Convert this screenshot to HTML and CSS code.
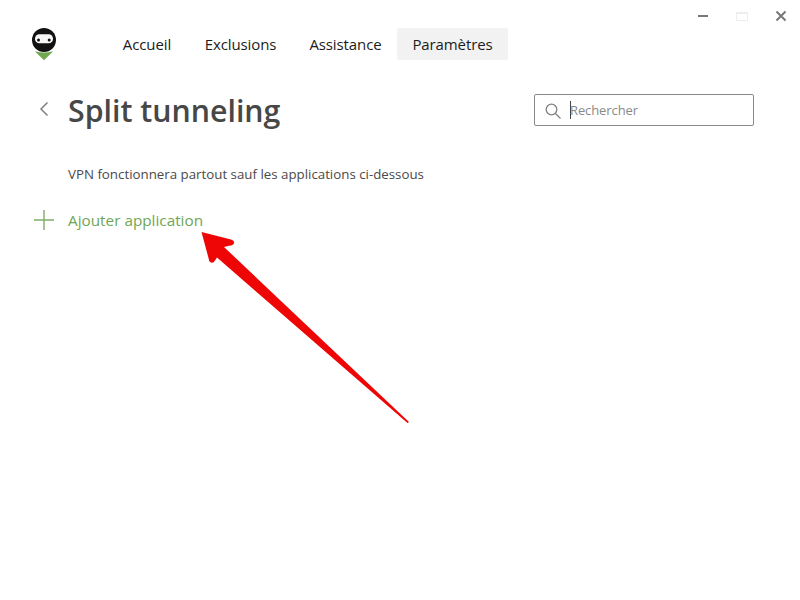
FILE: index.html
```html
<!DOCTYPE html>
<html lang="fr">
<head>
<meta charset="utf-8">
<title>Split tunneling</title>
<link rel="stylesheet" href="styles.css">
</head>
<body>
<div class="app">
  <div class="win-controls">
    <svg class="win-icon" width="12" height="12" viewBox="0 0 12 12"><rect x="1" y="5" width="10" height="2" fill="#777"/></svg>
    <svg class="win-icon" width="14" height="12" viewBox="0 0 14 12"><rect x="1.500" y="2.500" width="11" height="8" fill="none" stroke="#eee"/><rect x="1" y="2" width="12" height="2" fill="#eee"/></svg>
    <svg class="win-icon" width="12" height="12" viewBox="0 0 12 12"><path d="M1.500 1.500l9 9M10.500 1.500l-9 9" stroke="#777" stroke-width="2" fill="none"/></svg>
  </div>
  <header class="topbar">
    <svg class="logo" width="24" height="33" viewBox="0 0 24 33">
      <path d="M2.800 23.200Q12 26 21.200 23.200L12 32.200z" fill="#6fa84f"/>
      <circle cx="12" cy="12" r="12" fill="#111"/>
      <rect x="3" y="6.200" width="18" height="9" rx="4.300" fill="#f6f6f6"/>
      <circle cx="6.500" cy="12" r="1.500" fill="#111"/>
      <circle cx="17.200" cy="12" r="1.500" fill="#111"/>
    </svg>
    <nav class="nav">
      <a class="nav-item">Accueil</a>
      <a class="nav-item">Exclusions</a>
      <a class="nav-item">Assistance</a>
      <a class="nav-item nav-active">Paramètres</a>
    </nav>
  </header>
  <section class="title-row">
    <svg class="back" width="12" height="16" viewBox="0 0 12 16"><path d="M9.500 1.500L3 8l6.500 6.500" fill="none" stroke="#808080" stroke-width="1.500"/></svg>
    <h1 class="title">Split tunneling</h1>
    <div class="search">
      <svg class="search-icon" width="18" height="18" viewBox="0 0 18 18"><circle cx="7.500" cy="7.500" r="5.300" fill="none" stroke="#808080" stroke-width="1.300"/><path d="M11.500 11.500l5 5" stroke="#808080" stroke-width="1.300"/></svg>
      <span class="caret"></span>
      <span class="placeholder">Rechercher</span>
    </div>
  </section>
  <p class="desc">VPN fonctionnera partout sauf les applications ci-dessous</p>
  <div class="add">
    <svg class="plus" width="20" height="20" viewBox="0 0 20 20"><path d="M10 0v20M0 10h20" stroke="#7fae66" stroke-width="1.400"/></svg>
    <span class="add-label">Ajouter application</span>
  </div>
</div>
<svg class="arrow" width="800" height="600" viewBox="0 0 800 600">
  <path d="M201.500 232L231 239.500Q235 241 234 243.500Q232.500 246 229 245.800L224 247L409 422L407.500 423L217 257.500L215 260.500Q213 264 210 262Q209 261 208.500 258z" fill="#ee0505"/>
</svg>
</body>
</html>
```

FILE: styles.css
```css
* { box-sizing: border-box; }
html, body { margin: 0; padding: 0; background: #fff; }
body { width: 800px; height: 600px; overflow: hidden; position: relative; font-family: "Open Sans", "Noto Sans", sans-serif; color: #444; }
.app { display: flex; flex-direction: column; height: 600px; }
.win-controls { display: flex; justify-content: flex-end; gap: 26px; height: 28px; padding: 10px 13px 0 0; }
.win-icon { flex: none; }
.topbar { display: flex; align-items: flex-start; padding: 0 0 0 32px; height: 32px; }
.logo { flex: none; }
.nav { display: grid; grid-template-columns: 82px 105px 105px 110px; margin-left: 50px; }
.nav-item { display: flex; align-items: center; justify-content: center; height: 32px; font-size: 15px; letter-spacing: -0.1px; color: #1c1c1c; border-radius: 2px; }
.nav-active { background: #f2f2f2; margin-left: -1px; }
.title-row { display: flex; align-items: center; padding: 34px 46px 0 38px; height: 66px; }
.back { flex: none; margin-bottom: 3px; }
.title { margin: 2px 0 0 18px; font-size: 30.300px; font-weight: 600; line-height: 32px; color: #474747; flex: 1; }
.search { display: flex; align-items: center; width: 220px; height: 32px; border: 1px solid #8a8a8a; border-radius: 2px; padding-left: 9px; }
.search-icon { flex: none; margin-top: 1px; }
.caret { width: 1px; height: 18px; background: #444; margin-left: 8px; flex: none; }
.placeholder { font-size: 13px; letter-spacing: -0.1px; color: #8a8a8a; margin-left: -1px; }
.desc { margin: 38px 0 0 68px; font-size: 13.300px; line-height: 20px; color: #4a4a4a; }
.add { display: flex; align-items: center; margin: 26px 0 0 34px; height: 20px; }
.plus { flex: none; }
.add-label { margin: -1px 0 0 14px; font-size: 15.300px; color: #6fa655; }
.arrow { position: absolute; left: 0; top: 0; pointer-events: none; }
```
